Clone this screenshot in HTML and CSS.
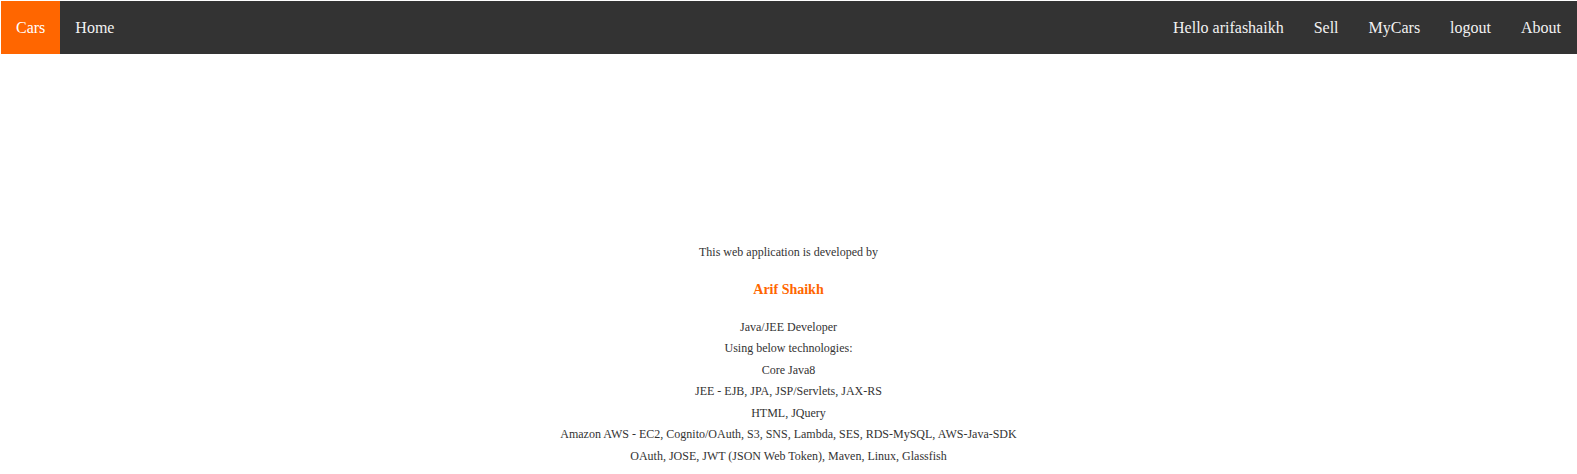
FILE: index.html
```html
<!DOCTYPE html>
<html>
<head>
<meta charset="utf-8">
<link rel="stylesheet" href="styles.css">
</head>
<body>
<nav class="topnav">
  <a class="nav-link active" href="#">Cars</a>
  <a class="nav-link" href="#">Home</a>
  <div class="nav-right">
    <a class="nav-link" href="#">Hello arifashaikh</a>
    <a class="nav-link" href="#">Sell</a>
    <a class="nav-link" href="#">MyCars</a>
    <a class="nav-link" href="#">logout</a>
    <a class="nav-link" href="#">About</a>
  </div>
</nav>
<main class="about">
  <div class="line">This web application is developed by</div>
  <div class="name">Arif Shaikh</div>
  <div class="line">Java/JEE Developer</div>
  <div class="line">Using below technologies:</div>
  <div class="line">Core Java8</div>
  <div class="line">JEE - EJB, JPA, JSP/Servlets, JAX-RS</div>
  <div class="line">HTML, JQuery</div>
  <div class="line">Amazon AWS - EC2, Cognito/OAuth, S3, SNS, Lambda, SES, RDS-MySQL, AWS-Java-SDK</div>
  <div class="line">OAuth, JOSE, JWT (JSON Web Token), Maven, Linux, Glassfish</div>
</main>
</body>
</html>
```
FILE: styles.css
```css
body {
  margin: 0;
  font-family: "Liberation Serif", "Times New Roman", serif;
  background: #fff;
  color: #333;
}
.topnav {
  display: flex;
  align-items: stretch;
  background: #333;
  margin: 1px 0 0 1px;
  height: 53px;
}
.nav-link {
  display: flex;
  align-items: center;
  padding: 0 15px;
  color: #f2f2f2;
  text-decoration: none;
  font-size: 16px;
}
.nav-link.active {
  background: #ff6600;
  color: #fff;
}
.nav-right {
  margin-left: auto;
  display: flex;
  padding-right: 1px;
}
.about {
  text-align: center;
  padding-top: 188px;
  font-size: 12px;
  line-height: 21.5px;
}
.name {
  color: #ff6600;
  font-weight: bold;
  font-size: 14px;
  margin: 15px 0 17px;
  line-height: 21px;
}
```
